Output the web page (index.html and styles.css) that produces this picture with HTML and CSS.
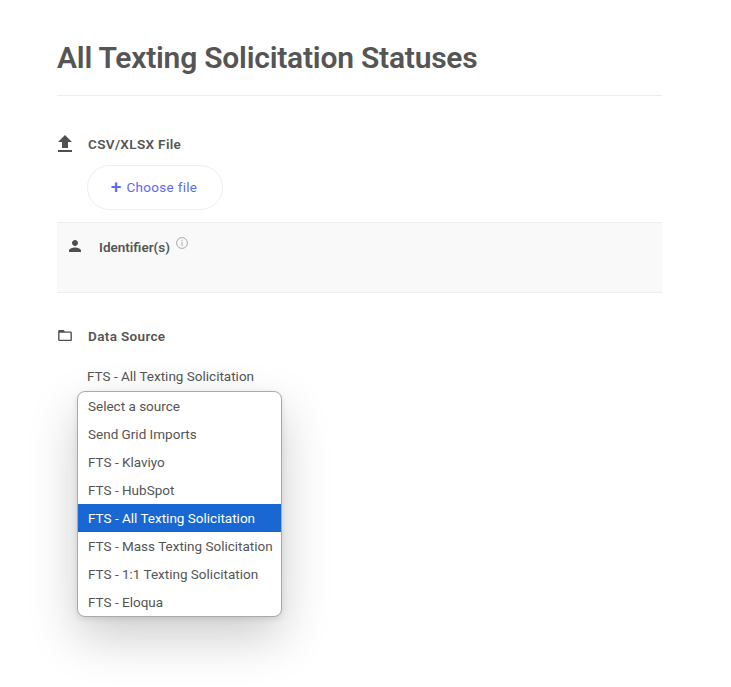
FILE: index.html
```html
<!DOCTYPE html>
<html lang="en">
<head>
  <meta charset="UTF-8" />
  <title>All Texting Solicitation Statuses</title>
  <link rel="stylesheet" href="styles.css">
</head>
<body>

  <div class="page">
    <h1>All Texting Solicitation Statuses</h1>

    <div class="field upload">
      <div class="field-head">
        <svg class="icon" width="14" height="17" viewBox="5 3 14 17"><path fill="#4f4f4f" d="M9 16h6v-6h4l-7-7-7 7h4zm-4 2h14v2H5z"/></svg>
        <label>CSV/XLSX File</label>
      </div>
      <button class="choose"><span class="plus">+</span>Choose file</button>
    </div>

    <div class="field identifiers">
      <div class="field-head">
        <svg class="icon" width="12" height="12" viewBox="4 4 16 16"><path fill="#4f4f4f" d="M12 12c2.21 0 4-1.79 4-4s-1.79-4-4-4-4 1.79-4 4 1.79 4 4 4zm0 2c-2.67 0-8 1.34-8 4v2h16v-2c0-2.66-5.33-4-8-4z"/></svg>
        <label>Identifier(s)</label>
        <svg class="info" width="12" height="12" viewBox="0 0 12 12"><circle cx="6" cy="6" r="5.4" fill="none" stroke="#aaa"/><path stroke="#aaa" d="M6 5.2v3.6M6 3.2v1.1"/></svg>
      </div>
    </div>

    <div class="field source">
      <div class="field-head">
        <svg class="icon" width="14" height="11" viewBox="2 4 20 16"><path fill="#4f4f4f" d="M20 6h-8l-2-2H4c-1.1 0-1.99.9-1.99 2L2 18c0 1.1.9 2 2 2h16c1.1 0 2-.9 2-2V8c0-1.1-.9-2-2-2zm0 12H4V8h16v10z"/></svg>
        <label>Data Source</label>
      </div>
      <div class="select-value">FTS - All Texting Solicitation</div>
      <ul class="dropdown">
        <li>Select a source</li>
        <li>Send Grid Imports</li>
        <li>FTS - Klaviyo</li>
        <li>FTS - HubSpot</li>
        <li class="selected">FTS - All Texting Solicitation</li>
        <li>FTS - Mass Texting Solicitation</li>
        <li>FTS - 1:1 Texting Solicitation</li>
        <li>FTS - Eloqua</li>
      </ul>
    </div>
  </div>

</body>
</html>
```

FILE: styles.css
```css
html, body {
  height: 687px;
}

body {
  margin: 0;
  background: white;
  color: #555555;
  font-family: Roboto, Lato, sans-serif;
}

.page {
  width: 605px;
  margin-left: 57px;
  padding-top: 39px;
}

h1 {
  margin: 0;
  padding-bottom: 18px;
  height: 38px;
  font-size: 30px;
  line-height: 38px;
  font-weight: 600;
  letter-spacing: -0.22px;
  border-bottom: 1px solid #eeeeee;
}

.field-head {
  display: flex;
  align-items: center;
  height: 16px;
}

.field-head label {
  font-size: 13.5px;
  font-weight: 600;
  letter-spacing: 0.35px;
}

.icon {
  flex: none;
}

.upload {
  padding-top: 40px;
  height: 86px;
}

.upload label {
  margin-left: 16px;
}

.upload .icon {
  margin: -1px 0 0 1px;
}

.choose {
  display: flex;
  align-items: center;
  justify-content: center;
  width: 136px;
  height: 45px;
  margin: 13px 0 0 30px;
  padding: 0 2px 2px 0;
  background: white;
  border: 1px solid #eeeeee;
  border-radius: 23px;
  color: #5c6bf2;
  font-family: inherit;
  font-size: 13.5px;
  font-weight: 400;
  letter-spacing: 0.3px;
}

.plus {
  margin-right: 5px;
  font-size: 19px;
  font-weight: 500;
  line-height: 13px;
}

.identifiers {
  height: 69px;
  background: #f9f9f9;
  border-top: 1px solid #eeeeee;
  border-bottom: 1px solid #eeeeee;
  padding-left: 12px;
  box-sizing: content-box;
}

.identifiers .field-head {
  margin-top: 15px;
  padding-top: 0;
}

.identifiers label {
  margin-left: 18px;
  padding-top: 2px;
  letter-spacing: 0;
}

.info {
  margin: -6px 0 0 6px;
}

.source {
  position: relative;
  padding-top: 35px;
}

.source label {
  margin-left: 16px;
}

.source .icon {
  margin: -2px 0 0 1px;
}

.select-value {
  margin: 23px 0 0 30px;
  font-size: 13.5px;
  line-height: 18px;
}

.dropdown {
  position: absolute;
  left: 20px;
  top: 98px;
  width: 203px;
  margin: 0;
  padding: 0;
  list-style: none;
  background: white;
  border: 1px solid #aaaaaa;
  border-radius: 8px;
  overflow: hidden;
  box-shadow: 0 20px 50px rgba(0, 0, 0, 0.2), 0 2px 6px rgba(0, 0, 0, 0.1);
  font-size: 13.5px;
}

.dropdown li {
  height: 28px;
  box-sizing: border-box;
  padding: 1px 0 0 10px;
  line-height: 27px;
  white-space: nowrap;
}

.dropdown .selected {
  background: #1967d2;
  color: white;
}
```
